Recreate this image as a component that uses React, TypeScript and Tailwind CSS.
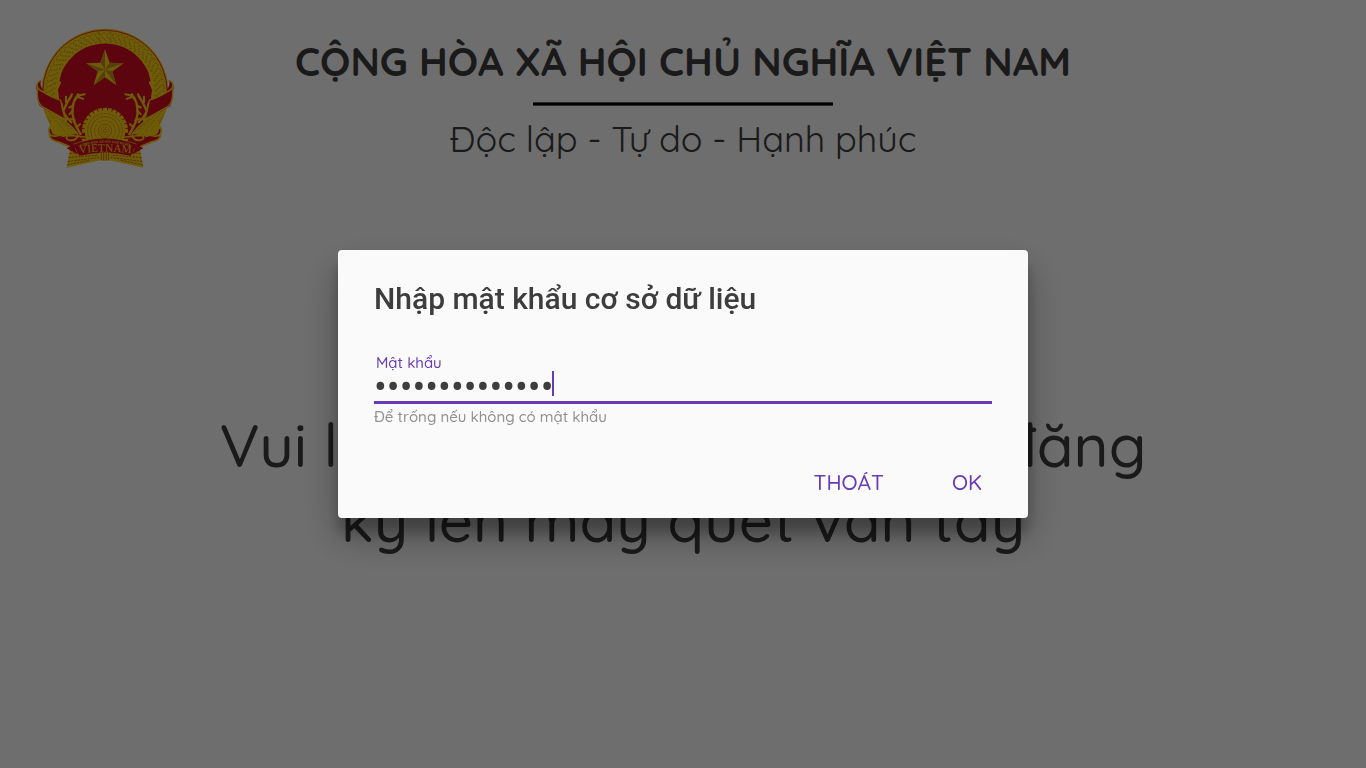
import { useState } from "react";

const GOLD = "#f8cf14";
const DEEP_GOLD = "#c79a22";
const RED = "#d20d24";

const TEETH = Array.from({ length: 15 }, (_, i) => -180 + i * (180 / 14));
const GRAINS = Array.from({ length: 44 }, (_, i) => -214 + i * (248 / 43));

function HalfEmblem() {
  return (
    <g>
      {/* wheat sheaf at the side */}
      <path d="M52 240 L66 258 L104 272 L122 300 L146 322 L170 352 L128 366 L92 330 L66 290 Z" fill={GOLD} />
      <path
        d="M70 272 L134 350 M84 276 L148 346 M98 284 L156 344 M72 292 L120 352 M112 300 L160 340"
        stroke={DEEP_GOLD}
        strokeWidth="3"
        strokeDasharray="5 4"
        fill="none"
      />
      {/* rice ears */}
      <path
        d="M168 342 C150 312 140 290 144 262 C146 244 152 232 164 226 M140 306 C122 290 112 274 110 250 M118 268 C126 250 128 244 140 228"
        stroke={GOLD}
        strokeWidth="7"
        fill="none"
        strokeLinecap="round"
      />
      <path
        d="M124 246 L124 230 M134 236 L142 222 M150 238 L160 222 M158 230 L176 236 M162 226 L180 222 M146 256 L134 262 M144 272 L134 282 M114 284 L106 292 M150 300 L138 296 M112 260 L104 252 M156 322 L166 312 M126 298 L120 304"
        stroke={GOLD}
        strokeWidth="6"
        strokeLinecap="round"
      />
      <path d="M92 236 C90 206 100 190 98 166 L110 160 L104 182 L110 186 L100 208 L102 236 Z" fill={GOLD} />
      {/* upper ribbon */}
      <path d="M36 210 C34 192 38 182 50 180 C44 192 50 204 58 210 Z" fill={RED} />
      <path d="M38 206 L70 226 L106 240 L118 296 L82 278 L46 258 Q38 250 38 206 Z" fill={RED} />
      <path
        d="M50 181 C32 186 34 204 52 214 C72 226 92 236 108 240 M38 204 C36 240 42 254 54 260 L118 296 M108 240 L116 274 L124 300"
        stroke={GOLD}
        strokeWidth="4"
        fill="none"
      />
      {/* lower ribbon */}
      <path d="M72 322 Q70 352 90 362 L146 386 L176 366 L160 340 L120 350 Z" fill={RED} />
      <path d="M74 316 L84 342 L122 352 L100 326 L84 300 Z" fill={GOLD} />
      <path
        d="M80 318 C68 326 70 346 88 348 C112 350 134 326 150 334 C170 344 154 364 134 360 C120 357 124 346 138 346 C160 348 172 352 190 350 M74 340 C74 356 84 362 104 366 C122 372 134 378 150 388"
        stroke={GOLD}
        strokeWidth="5"
        fill="none"
      />
      {/* straw bundle at the foot */}
      <path d="M136 386 L126 443 L226 420 L242 420 L242 394 L168 394 Z" fill={GOLD} />
      <path
        d="M134 400 L160 397 M131 412 L222 405 M129 424 L224 412 M127 434 L196 420 M136 391 L156 390"
        stroke="#a93a1c"
        strokeWidth="2"
        strokeDasharray="7 3"
      />
      <path d="M126 384 L146 374 L160 404 L140 392 Z" fill={RED} />
    </g>
  );
}

function Emblem() {
  return (
    <svg viewBox="34 24 414 422" className="h-[141px] w-[138px]" role="img" aria-label="Quốc huy Việt Nam">
      <defs>
        <path id="banner-lower" d="M150 401 Q242 388 334 401" />
        <path id="banner-upper" d="M150 385 Q242 350 334 385" />
      </defs>
      <circle cx="241" cy="217" r="191" fill={GOLD} />
      <circle cx="241" cy="217" r="187" fill="none" stroke={RED} strokeWidth="2.5" />
      {GRAINS.map((a) => (
        <path
          key={a}
          transform={`translate(241 217) rotate(${a})`}
          d="M150 -6 l6 4 M162 3 l7 -4 M172 -5 l6 5 M156 8 l6 -3 M177 8 l4 -3"
          stroke={DEEP_GOLD}
          strokeWidth="3"
        />
      ))}
      <path d="M241 70 A141 141 0 0 1 382 212 Q376 300 320 356 L162 356 Q106 300 100 212 A141 141 0 0 1 241 70 Z" fill={RED} />
      <path d="M224 28 L224 68 M258 28 L258 68" stroke={DEEP_GOLD} strokeWidth="2" />

      {/* five-pointed star with shaded facets */}
      <path d="M241 88 L255 128 L297 129 L263 154 L275 195 L241 171 L207 195 L219 154 L185 129 L227 128 Z" fill={GOLD} />
      <path
        d="M241 88 L241 148 L227 128 Z M297 129 L241 148 L255 128 Z M275 195 L241 148 L263 154 Z M207 195 L241 148 L241 171 Z M185 129 L241 148 L219 154 Z"
        fill="#c09020"
      />

      {/* cogwheel */}
      {TEETH.map((a) => (
        <rect key={a} x="58" y="-6" width="11" height="12" fill={GOLD} transform={`translate(241 332) rotate(${a})`} />
      ))}
      <circle cx="241" cy="332" r="61" fill={GOLD} />
      <g fill="none" stroke="#c07a1c" strokeWidth="2">
        <circle cx="241" cy="332" r="52" strokeDasharray="9 3" />
        <circle cx="241" cy="332" r="43" />
        <circle cx="241" cy="332" r="31" strokeDasharray="6 3" />
        <circle cx="241" cy="332" r="20" />
        <circle cx="241" cy="332" r="12" strokeDasharray="5 3" />
        <circle cx="241" cy="332" r="5" />
      </g>

      <HalfEmblem />
      <g transform="translate(482 0) scale(-1 1)">
        <HalfEmblem />
      </g>

      {/* name banner */}
      <path d="M146 374 Q241 334 336 374 L318 407 Q241 388 164 407 Z" fill={RED} />
      <path d="M146 372 Q241 332 336 372" stroke={GOLD} strokeWidth="2" fill="none" />
      <rect x="224" y="397" width="34" height="24" fill={GOLD} />
      <path d="M230 398 V420 M237 398 V421 M245 398 V421 M252 398 V420" stroke="#b04a1c" strokeWidth="2" />
      <text fill={GOLD} textAnchor="middle" className="font-['Liberation_Serif',serif] text-[34px]">
        <textPath href="#banner-lower" startOffset="50%">
          VIETNAM
        </textPath>
      </text>
      <text fill={GOLD} textAnchor="middle" className="font-['Liberation_Sans',sans-serif] text-[10px] font-bold">
        <textPath href="#banner-upper" startOffset="50%">
          CỘNG HÒA XÃ HỘI CHỦ NGHĨA
        </textPath>
      </text>
    </svg>
  );
}

export default function App() {
  const [password, setPassword] = useState("matkhaucosodl1");

  return (
    <div className="relative min-h-screen bg-[#fafafa] font-[Quicksand,Lato,sans-serif] text-[#3d3d3d]">
      <header className="grid grid-cols-[1fr_auto_1fr] items-start px-9 pt-7">
        <Emblem />
        <div className="flex flex-col items-center pt-2">
          <h1 className="text-[40px] leading-[50px] font-bold">CỘNG HÒA XÃ HỘI CHỦ NGHĨA VIỆT NAM</h1>
          <div className="mt-4 h-1 w-[300px] border-y border-[#5c5c5c] bg-black" />
          <p className="mt-[10px] text-[36px] leading-[45px]">Độc lập - Tự do - Hạnh phúc</p>
        </div>
      </header>
      <main className="mx-auto mt-[238px] max-w-[960px] text-center text-[60px] leading-[75px] font-medium">
        Vui lòng đặt ngón tay chưa đăng ký lên máy quét vân tay
      </main>

      <div className="fixed inset-0 flex items-center justify-center bg-black/56">
        <form
          role="dialog"
          aria-modal="true"
          aria-labelledby="dialog-title"
          onSubmit={(e) => e.preventDefault()}
          className="w-full max-w-[690px] rounded bg-[#fafafa] px-9 pt-7 pb-[11px] shadow-[0_19px_38px_rgba(0,0,0,0.3),0_15px_12px_rgba(0,0,0,0.22)]"
        >
          <h2 id="dialog-title" className="font-[Roboto,sans-serif] text-[30px] leading-[42px] font-medium">
            Nhập mật khẩu cơ sở dữ liệu
          </h2>
          <div className="mt-[34px]">
            <label htmlFor="password" className="block pl-0.5 text-[15px] leading-[18px] font-medium text-[#673ab7]">
              Mật khẩu
            </label>
            <div className="relative border-b-3 border-[#673ab7]">
              <input
                id="password"
                type="password"
                value={password}
                onChange={(e) => setPassword(e.target.value)}
                aria-describedby="password-hint"
                className="block h-[29px] w-full bg-transparent font-[Roboto,sans-serif] text-[38px] leading-[29px] caret-[#673ab7] outline-none"
              />
              <span className="absolute -top-px left-[178px] h-[25px] w-0.5 bg-[#673ab7]" />
            </div>
            <p id="password-hint" className="mt-[3px] text-[15px] leading-5 font-medium text-[#8f8f8f]">
              Để trống nếu không có mật khẩu
            </p>
          </div>
          <div className="-mr-[18px] mt-8 flex justify-end gap-3">
            <button type="button" className="h-12 px-7 text-[21px] font-medium text-[#673ab7]">
              THOÁT
            </button>
            <button type="submit" className="h-12 px-7 text-[21px] font-medium text-[#673ab7]">
              OK
            </button>
          </div>
        </form>
      </div>
    </div>
  );
}
